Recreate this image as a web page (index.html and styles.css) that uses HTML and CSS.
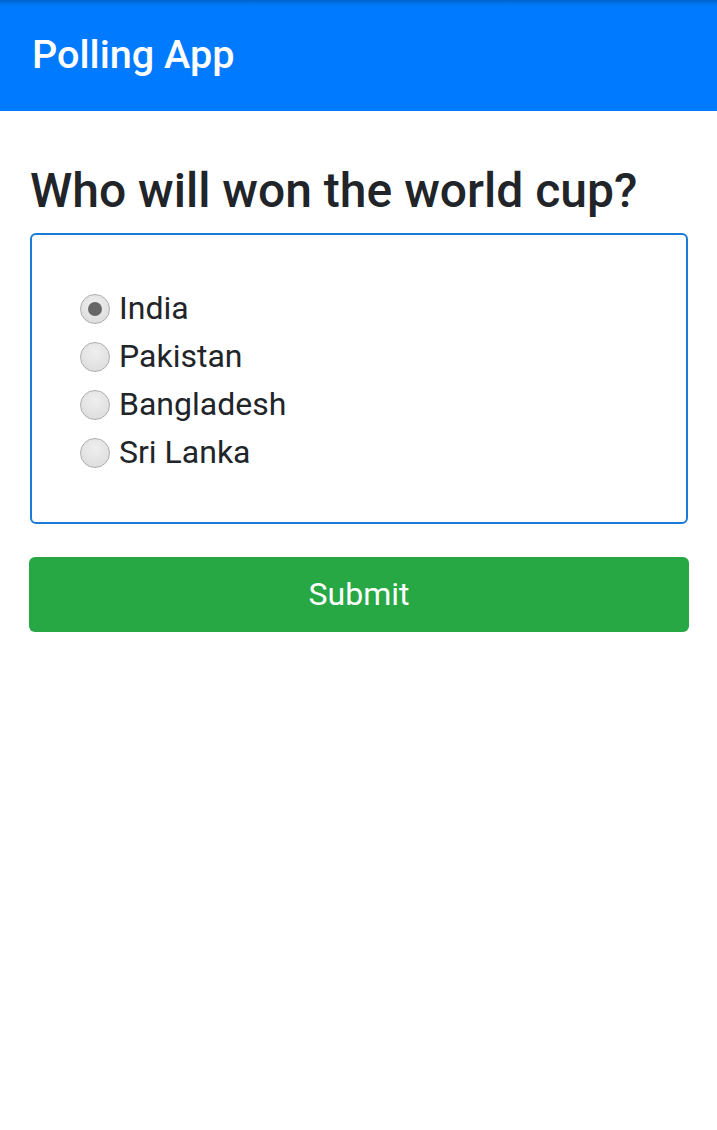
FILE: index.html
```html
<!DOCTYPE html>
<html lang="en">
<head>
<meta charset="utf-8">
<title>Polling App</title>
<link rel="stylesheet" href="styles.css">
</head>
<body>
<header class="navbar"><span class="brand">Polling App</span></header>
<main class="content">
  <h1 class="question">Who will won the world cup?</h1>
  <form class="poll">
    <div class="options">
      <label class="option"><input type="radio" name="team" checked><span class="dot"></span><span class="label">India</span></label>
      <label class="option"><input type="radio" name="team"><span class="dot"></span><span class="label">Pakistan</span></label>
      <label class="option"><input type="radio" name="team"><span class="dot"></span><span class="label">Bangladesh</span></label>
      <label class="option"><input type="radio" name="team"><span class="dot"></span><span class="label">Sri Lanka</span></label>
    </div>
    <button type="button" class="submit">Submit</button>
  </form>
</main>
</body>
</html>
```
FILE: styles.css
```css
* { box-sizing: border-box; }
html, body { margin: 0; padding: 0; background: #fff; }
body { font-family: Roboto, "Noto Sans", "Liberation Sans", sans-serif; color: #212529; }

.navbar {
  height: 111px;
  background: linear-gradient(to bottom, #0062c8 0px, #0076f4 4px, #007bff 8px, #007bff 100%);
  display: flex;
  align-items: center;
  padding-left: 32px;
}
.brand { color: #fff; font-size: 39.6px; font-weight: 500; line-height: 1.172; }

.content { padding: 0 28px 0 29px; }
.question {
  margin: 51px 0 13px 1px;
  font-size: 48px;
  font-weight: 500;
  line-height: 1.2;
  color: #212529;
}

.options {
  border: 2px solid #1a7bd8;
  border-radius: 6px;
  margin-left: 1px;
  margin-right: 1px;
  padding: 49px 48px 46px 48px;
  display: flex;
  flex-direction: column;
}
.option { display: flex; align-items: center; height: 48px; font-size: 32px; line-height: 48px; cursor: pointer; }
.option input { position: absolute; opacity: 0; width: 0; height: 0; margin: 0; }
.dot {
  width: 30px; height: 30px;
  border-radius: 50%;
  border: 1.5px solid #adadad;
  background: radial-gradient(circle at 50% 35%, #efefef 0%, #e0e0e0 70%, #d6d6d6 100%);
  margin-right: 9px;
  margin-top: 2px;
  display: flex; align-items: center; justify-content: center;
  flex: none;
}
.option input:checked + .dot::after {
  content: "";
  width: 14px; height: 14px;
  border-radius: 50%;
  background: #676767;
}
.label { color: #212529; }

.submit {
  display: block;
  width: 100%;
  height: 75px;
  margin-top: 33px;
  border: none;
  border-radius: 6px;
  background: #28a745;
  color: #fff;
  font-family: inherit;
  font-size: 32px;
}
```
